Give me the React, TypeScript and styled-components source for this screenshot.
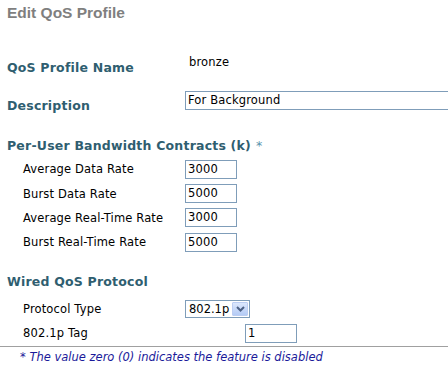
import styled, { createGlobalStyle } from "styled-components";

const GlobalStyle = createGlobalStyle`
  html, body {
    margin: 0;
    padding: 0;
    background: #ffffff;
  }
  body {
    font-family: "DejaVu Sans", Verdana, sans-serif;
    font-size: 11.5px;
    letter-spacing: 0.15px;
    color: #000000;
  }
`;

const Page = styled.div`
  width: 448px;
  height: 367px;
  overflow: hidden;
`;

const Title = styled.h1`
  margin: 0;
  padding: 4px 0 0 7px;
  height: 46px;
  font-family: "Liberation Sans", Arial, sans-serif;
  font-size: 15.5px;
  letter-spacing: 0;
  line-height: 17px;
  font-weight: bold;
  color: #7f7f7f;
`;

interface IRow {
  h?: number;
  mt?: number;
}

const Row = styled.div<IRow>`
  display: flex;
  align-items: center;
  height: ${(p) => p.h ?? 24}px;
  margin-top: ${(p) => p.mt ?? 0}px;
  padding-left: 7px;
`;

interface ILabel {
  drop?: number;
  indent?: number;
}

const MainLabel = styled.div<ILabel>`
  width: 178px;
  flex: none;
  font-weight: bold;
  font-size: 12.5px;
  letter-spacing: 0.2px;
  color: #2f5e70;
  padding-top: ${(p) => p.drop ?? 0}px;
`;

const SubLabel = styled.div<ILabel>`
  width: ${(p) => 178 - (p.indent ?? 16)}px;
  flex: none;
  padding-left: ${(p) => p.indent ?? 16}px;
`;

const Value = styled.div`
  padding-left: 4px;
`;

const Heading = styled.div<IRow>`
  display: flex;
  align-items: center;
  height: ${(p) => p.h ?? 20}px;
  margin-top: ${(p) => p.mt ?? 0}px;
  padding-left: 7px;
  font-weight: bold;
  font-size: 12.5px;
  letter-spacing: 0.2px;
  color: #2f5e70;
`;

const Star = styled.span`
  color: #5a93ad;
  font-weight: normal;
  margin-left: 5px;
`;

interface IInput {
  w: number;
  offset?: number;
  open?: boolean;
}

const TextBox = styled.div<IInput>`
  box-sizing: border-box;
  width: ${(p) => p.w}px;
  height: 19px;
  margin-left: ${(p) => p.offset ?? 0}px;
  border: 1px solid #7f9db9;
  border-right: ${(p) => (p.open ? "none" : "1px solid #7f9db9")};
  padding: 0 2px;
  line-height: 17px;
  background: #ffffff;
  white-space: nowrap;
  overflow: hidden;
`;

const Select = styled.div`
  box-sizing: border-box;
  display: flex;
  align-items: center;
  justify-content: space-between;
  width: 65px;
  height: 18px;
  border: 1px solid #7f9db9;
  padding: 1px 1px 1px 3px;
  letter-spacing: 0;
  background: #ffffff;
`;

const DropButton = styled.div`
  width: 16px;
  height: 14px;
  display: flex;
  align-items: center;
  justify-content: center;
  background: linear-gradient(#dce7fc, #b4cbf5);
  border: 1px solid #bccdf2;
  border-radius: 1px;
  box-sizing: border-box;
`;

const Rule = styled.hr`
  margin: 0;
  border: none;
  border-top: 1px solid #a0a0a0;
  height: 0;
`;

const Note = styled.div`
  padding: 3px 0 0 20px;
  font-style: italic;
  letter-spacing: 0;
  color: #1a1a9a;
`;

const rates = [
  { label: "Average Data Rate", value: "3000" },
  { label: "Burst Data Rate", value: "5000" },
  { label: "Average Real-Time Rate", value: "3000" },
  { label: "Burst Real-Time Rate", value: "5000" },
];

function App() {
  return (
    <Page>
      <GlobalStyle />
      <Title>Edit QoS Profile</Title>

      <Row>
        <MainLabel drop={11}>QoS Profile Name</MainLabel>
        <Value>bronze</Value>
      </Row>
      <Row mt={14}>
        <MainLabel drop={11}>Description</MainLabel>
        <TextBox w={263} open>
          For Background
        </TextBox>
      </Row>

      <Heading mt={22} h={23}>
        Per-User Bandwidth Contracts (k)<Star>*</Star>
      </Heading>
      {rates.map((r) => (
        <Row key={r.label} h={24.4}>
          <SubLabel>{r.label}</SubLabel>
          <TextBox w={52}>{r.value}</TextBox>
        </Row>
      ))}

      <Heading mt={17}>Wired QoS Protocol</Heading>
      <Row mt={5}>
        <SubLabel>Protocol Type</SubLabel>
        <Select>
          802.1p
          <DropButton>
            <svg width="9" height="6" viewBox="0 0 9 6">
              <path d="M1 1 L4.5 4.5 L8 1" fill="none" stroke="#4d6185" strokeWidth="2" />
            </svg>
          </DropButton>
        </Select>
      </Row>
      <Row h={25}>
        <SubLabel>802.1p Tag</SubLabel>
        <TextBox w={52} offset={60}>
          1
        </TextBox>
      </Row>
      <Rule />
      <Note>* The value zero (0) indicates the feature is disabled</Note>
    </Page>
  );
}

export default App;
